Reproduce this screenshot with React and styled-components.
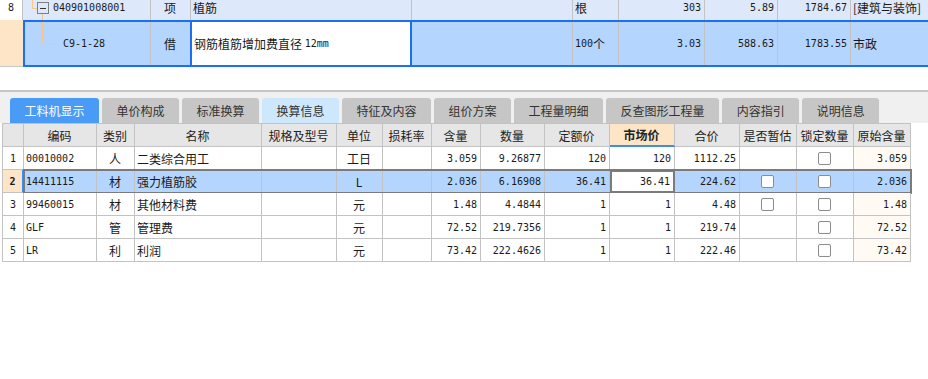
import React from "react";
import styled, { createGlobalStyle, css } from "styled-components";

const GlobalStyle = createGlobalStyle`
  html, body {
    margin: 0;
    padding: 0;
    background: #fff;
  }
  body {
    font-family: "Noto Sans CJK SC", "Noto Sans", sans-serif;
    font-size: 12px;
    color: #1a1a1a;
    overflow: hidden;
  }
  * {
    box-sizing: border-box;
  }
`;

const MONO = `"DejaVu Sans Mono", "Liberation Mono", monospace`;

const justify = (a) =>
  a === "right" ? "flex-end" : a === "center" ? "center" : "flex-start";

const Screen = styled.div`
  width: 928px;
  height: 379px;
  display: flex;
  flex-direction: column;
  overflow: hidden;
`;

/* ---------- upper grid (budget items) ---------- */

const UpperPane = styled.div`
  height: 90px;
  flex: none;
  overflow: hidden;
`;

const UpperRow = styled.div`
  display: flex;
  height: ${(p) => p.$h}px;
  background: ${(p) => p.$bg || "transparent"};
`;

const UpperCell = styled.div`
  flex: none;
  width: ${(p) => p.$w}px;
  display: flex;
  align-items: ${(p) => (p.$top ? "flex-start" : "center")};
  justify-content: ${(p) => justify(p.$align)};
  padding: 0 3px 0 2px;
  line-height: 16px;
  border-right: ${(p) => (p.$noLine ? "none" : "1px solid #c3c3c3")};
  background: ${(p) => p.$bg || "transparent"};
  white-space: nowrap;
  overflow: hidden;
  font-family: ${(p) => (p.$mono ? MONO : "inherit")};
  font-size: ${(p) => (p.$mono ? "10px" : "12px")};
  ${(p) =>
    p.$editing &&
    css`
      border-left: 2px solid #1a6ff2;
      border-right: 2px solid #1a6ff2;
    `}
`;

const UpperNum = styled(UpperCell)`
  padding: 0;
  border-bottom: ${(p) => (p.$last ? "1px solid #c8c8c8" : "none")};
`;

const SelectedBox = styled.div`
  flex: 1;
  display: flex;
  border: 2px solid #1a6ff2;
  border-right: none;
  background: #b4d5fd;
`;

const TreeCode = styled(UpperCell)`
  padding-left: 0;
  align-items: stretch;
  gap: 0;
`;

const CodeText = styled.span`
  font-family: ${MONO};
  font-size: 10px;
  display: flex;
  align-items: ${(p) => (p.$top ? "flex-start" : "center")};
`;

const Mono = styled.span`
  font-family: ${MONO};
  font-size: 10px;
`;

const TreeParent = () => (
  <svg width="30" height="20" style={{ flex: "none" }}>
    <path d="M9.5 0 V8.5 H14" stroke="#f7c48a" fill="none" />
    <path d="M19.5 14 V20" stroke="#f7c48a" fill="none" />
    <rect x="14.5" y="2.5" width="11" height="11" fill="none" stroke="#7f7f7f" />
    <path d="M17 8.5 H23" stroke="#333" />
  </svg>
);

const TreeChild = () => (
  <svg width="38" height="43" style={{ flex: "none" }}>
    <path d="M17.5 0 V21.5 H33" stroke="#f7c48a" fill="none" />
  </svg>
);

/* ---------- lower panel ---------- */

const Splitter = styled.div`
  height: 2px;
  flex: none;
  background: #c6c6c6;
`;

const TabStrip = styled.div`
  height: 31px;
  flex: none;
  display: flex;
  align-items: flex-end;
  gap: 3px;
  padding-left: 10px;
  background: #f0f0f0;
`;

const Tab = styled.div`
  height: 25px;
  padding: 0 14.5px;
  display: flex;
  align-items: center;
  border-radius: 3px 3px 0 0;
  white-space: nowrap;
  color: ${(p) => (p.$variant === "active" ? "#fff" : "#333")};
  background: ${(p) =>
    p.$variant === "active"
      ? "#4a9bf6"
      : p.$variant === "soft"
      ? "#cde7fc"
      : "#c6c6c6"};
`;

const Grid = styled.div`
  margin-left: 2px;
  width: 909px;
  border-left: 1px solid #c3c3c3;
  border-top: 1px solid #c3c3c3;
`;

const Row = styled.div`
  display: flex;
`;

const SelGroup = styled.div`
  display: flex;
  outline: 2px solid #7b7b7b;
  outline-offset: -1px;
`;

const Cell = styled.div`
  flex: none;
  width: ${(p) => p.$w}px;
  height: 23px;
  display: flex;
  align-items: center;
  justify-content: ${(p) => justify(p.$align)};
  padding: 0 3px 0 2px;
  border-right: 1px solid #c3c3c3;
  border-bottom: 1px solid #c3c3c3;
  background: ${(p) => p.$bg || "#fff"};
  white-space: nowrap;
  overflow: hidden;
  font-family: ${(p) => (p.$mono ? MONO : "inherit")};
  font-size: ${(p) => (p.$mono ? "10px" : "12px")};
  ${(p) =>
    p.$editing &&
    css`
      border: 2px solid #7b7b7b;
    `}
`;

const HeadCell = styled(Cell)`
  background: ${(p) => (p.$hot ? "#fde5c6" : "#e6e6e6")};
  color: #222;
  font-weight: ${(p) => (p.$hot ? 700 : 400)};
  border-bottom: ${(p) =>
    p.$hot ? "2px solid #3d8ee8" : "1px solid #c3c3c3"};
`;

const NumCell = styled(Cell)`
  width: 21px;
  padding: 0;
  justify-content: center;
  font-family: ${MONO};
  font-size: 10px;
  background: ${(p) => (p.$selected ? "#fee5c8" : p.$head ? "#e6e6e6" : "#fff")};
  font-weight: ${(p) => (p.$selected ? 700 : 400)};
  border-right: ${(p) =>
    p.$selected ? "2px solid #3b8ff2" : "1px solid #c3c3c3"};
`;

const Check = styled.span`
  width: 13px;
  height: 13px;
  border: 1px solid #8c8c8c;
  border-radius: 2px;
  background: #fff;
`;

const tabs = [
  { label: "工料机显示", variant: "active" },
  { label: "单价构成" },
  { label: "标准换算" },
  { label: "换算信息", variant: "soft" },
  { label: "特征及内容" },
  { label: "组价方案" },
  { label: "工程量明细" },
  { label: "反查图形工程量" },
  { label: "内容指引" },
  { label: "说明信息" },
];

const cols = [
  { key: "code", title: "编码", w: 73, align: "left", mono: true },
  { key: "type", title: "类别", w: 38, align: "center" },
  { key: "name", title: "名称", w: 127, align: "left" },
  { key: "spec", title: "规格及型号", w: 75, align: "left" },
  { key: "unit", title: "单位", w: 46, align: "center" },
  { key: "loss", title: "损耗率", w: 49, align: "right", mono: true },
  { key: "content", title: "含量", w: 49, align: "right", mono: true },
  { key: "qty", title: "数量", w: 64, align: "right", mono: true },
  { key: "quota", title: "定额价", w: 65, align: "right", mono: true },
  { key: "market", title: "市场价", w: 65, align: "right", mono: true, hot: true },
  { key: "total", title: "合价", w: 65, align: "right", mono: true },
  { key: "est", title: "是否暂估", w: 57, check: true },
  { key: "lock", title: "锁定数量", w: 57, check: true },
  { key: "orig", title: "原始含量", w: 57, align: "right", mono: true, tint: true },
];

const rows = [
  { n: 1, code: "00010002", type: "人", name: "二类综合用工", unit: "工日", content: "3.059", qty: "9.26877", quota: "120", market: "120", total: "1112.25", lock: true, orig: "3.059" },
  { n: 2, code: "14411115", type: "材", name: "强力植筋胶", unit: "L", content: "2.036", qty: "6.16908", quota: "36.41", market: "36.41", total: "224.62", est: true, lock: true, orig: "2.036", selected: true },
  { n: 3, code: "99460015", type: "材", name: "其他材料费", unit: "元", content: "1.48", qty: "4.4844", quota: "1", market: "1", total: "4.48", est: true, lock: true, orig: "1.48" },
  { n: 4, code: "GLF", type: "管", name: "管理费", unit: "元", content: "72.52", qty: "219.7356", quota: "1", market: "1", total: "219.74", lock: true, orig: "72.52" },
  { n: 5, code: "LR", type: "利", name: "利润", unit: "元", content: "73.42", qty: "222.4626", quota: "1", market: "1", total: "222.46", lock: true, orig: "73.42" },
];

const cellBg = (row, c) => {
  if (row.selected) return c.key === "market" ? "#fff" : "#b4d5fd";
  return c.tint ? "#fffaf3" : "#fff";
};

const BodyRow = ({ row }) => {
  const cells = cols.map((c) => (
    <Cell
      key={c.key}
      $w={c.w}
      $align={c.check ? "center" : c.align}
      $mono={c.mono}
      $bg={cellBg(row, c)}
      $editing={row.selected && c.key === "market"}
    >
      {c.check ? row[c.key] ? <Check /> : null : row[c.key]}
    </Cell>
  ));
  return (
    <Row>
      <NumCell $selected={row.selected}>{row.n}</NumCell>
      {row.selected ? <SelGroup>{cells}</SelGroup> : cells}
    </Row>
  );
};

const App = () => {
  return (
    <Screen>
      <GlobalStyle />
      <UpperPane>
        <UpperRow $h={20} $bg="#dde8fb">
          <UpperNum $w={23} $align="center" $top $mono $bg="#fff">
            8
          </UpperNum>
          <TreeCode $w={128} $top>
            <TreeParent />
            <CodeText $top>040901008001</CodeText>
          </TreeCode>
          <UpperCell $w={40} $align="center" $top>项</UpperCell>
          <UpperCell $w={221} $top>植筋</UpperCell>
          <UpperCell $w={161} $top />
          <UpperCell $w={46} $top>根</UpperCell>
          <UpperCell $w={86} $align="right" $top $mono>303</UpperCell>
          <UpperCell $w={73} $align="right" $top $mono>5.89</UpperCell>
          <UpperCell $w={73} $align="right" $top $mono>1784.67</UpperCell>
          <UpperCell $w={120} $top $noLine>[建筑与装饰]</UpperCell>
        </UpperRow>
        <UpperRow $h={47}>
          <UpperNum $w={23} $noLine $last $bg="#fee5c8" />
          <SelectedBox>
            <TreeCode $w={126}>
              <TreeChild />
              <CodeText>C9-1-28</CodeText>
            </TreeCode>
            <UpperCell $w={39} $align="center" $noLine>借</UpperCell>
            <UpperCell $w={222} $editing $bg="#fff">
              钢筋植筋增加费直径&nbsp;<Mono>12mm</Mono>
            </UpperCell>
            <UpperCell $w={161} />
            <UpperCell $w={46}>
              <Mono>100</Mono>个
            </UpperCell>
            <UpperCell $w={86} $align="right" $mono>3.03</UpperCell>
            <UpperCell $w={73} $align="right" $mono>588.63</UpperCell>
            <UpperCell $w={73} $align="right" $mono>1783.55</UpperCell>
            <UpperCell $w={120} $noLine>市政</UpperCell>
          </SelectedBox>
        </UpperRow>
      </UpperPane>

      <Splitter />
      <TabStrip>
        {tabs.map((t) => (
          <Tab key={t.label} $variant={t.variant}>
            {t.label}
          </Tab>
        ))}
      </TabStrip>

      <Grid>
        <Row>
          <NumCell $head />
          {cols.map((c) => (
            <HeadCell key={c.key} $w={c.w} $align="center" $hot={c.hot}>
              {c.title}
            </HeadCell>
          ))}
        </Row>
        {rows.map((r) => (
          <BodyRow key={r.n} row={r} />
        ))}
      </Grid>
    </Screen>
  );
};

export default App;
